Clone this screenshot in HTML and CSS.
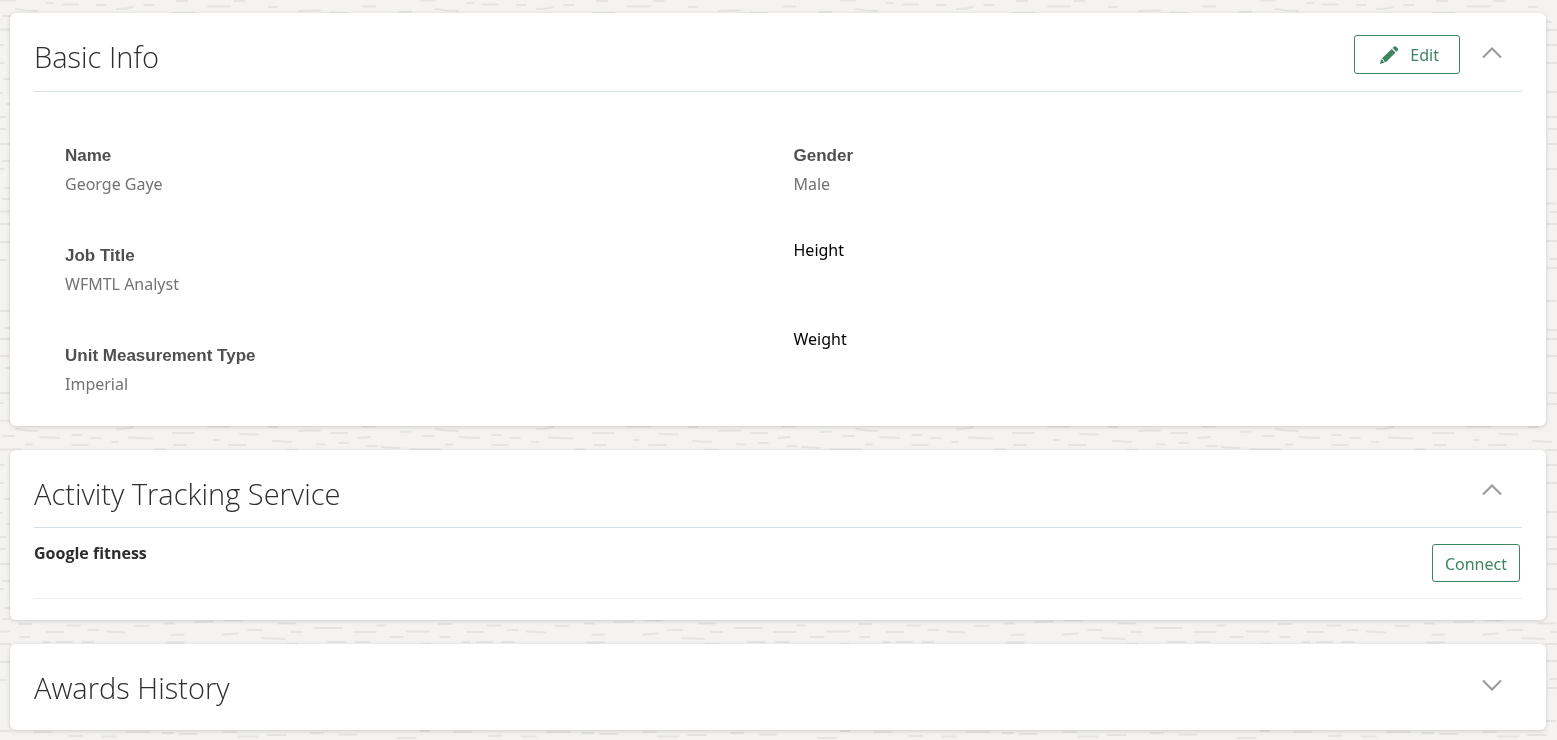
FILE: index.html
```html
<!DOCTYPE html>
<html lang="en">
<head>
<meta charset="utf-8">
<title>Profile</title>
<link rel="stylesheet" href="styles.css">
</head>
<body>
<svg class="texture" aria-hidden="true">
  <defs>
    <pattern id="grain" width="420" height="420" patternUnits="userSpaceOnUse">
      <path d="M0 .5h15M16 9l10 1.500l12 .5M47 3h6M63 4.500h15M97 5h9M117 9l9-.5l7-1.500M144 5h10M177 1h10M173 13h21M208 6.500h22M234 1h10M269 7h8M299 11l12-.5h9M331 13h16M363 6.500h12M400 12l11-.5M3 16h11M40 17l19 1M72 15h9M91 18h9M129 17.500l11 .5l12 .5M240 14l18 .5M358 18l12-1M26 24.500h6M72 25h16M112 22h6M174 25h12M214 20h5M229 25h17M273 21l18 1M317 24l8 .5M339 23h9M367 26h10M382 27l18 1M0 29.500h20M410 29.500h10M156 29.500h8"/>
      <path d="M19 204h12M67 205.500h13M135 206h13M165 203.500h9M195 202l18-.5M225 200.500h17M279 203.500h16M377 205.500h8M47 212h16M88 210h10M107 211.500l18 1M172 215l12-.5M223 214.500l15-1M248 210h14M291 212h11M315 208h27M354 212h22M20 217h10M43 222h7M57 222h15M82 222h12M167 222.500h17M262 218l22 1M328 222h17M356 222h13M390 217h13M407 211.500h13"/>
      <path d="M0 211.500h9M0 224h10M0 242h10M0 260h6M0 311h10M5 328h5M0 339h10M0 356h8M6 368h4M0 393h10M0 403h3M0 45h4M0 63h4M4 79h6M0 93h2M7 104h3M0 117h6M0 129h5M0 144h10M3 161h7M0 169h4M5 188h5M3 199h6"/>
      <path d="M34 312h17M69 316h13M102 316.500h14M127 312h23M162 313h11M180 314h17M224 312h12M238 316.500h20M268 315h18M311 313h12M340 314.500h16M398 318h18"/>
      <path d="M286 30h11M286 45h11M286 63h11M286 92h11M286 117h11M289 129h8M288 144h9M286 169h11M286 224h11M286 241h11M290 259h7M288 268h9M286 301h9M288 330h9M286 339h11M286 356h11M289 393h8M288 404h9"/>
    </pattern>
  </defs>
  <rect width="100%" height="100%" fill="url(#grain)"/>
</svg>
<main class="page">
  <section class="card card-basic">
    <header class="card-header">
      <h2 class="title">Basic Info</h2>
      <button class="btn btn-edit" type="button">
        <svg class="pencil" viewBox="0 0 20 20" aria-hidden="true"><path d="M1 19l1-4.500 2 .5.5 2 1.500.500zM2.800 13.600L12.700 4 16.500 7.500 6.800 17.200 5.200 16.500 4.800 14.800zM13.600 3.100L15.200 1.500Q16 .8 16.900 1.600L19 3.700Q19.600 4.500 18.900 5.200L17.400 6.700z"/></svg>
        <span>Edit</span>
      </button>
      <button class="toggle" type="button" aria-label="Collapse Basic Info"><svg viewBox="0 0 24 16" aria-hidden="true"><path d="M3 12.500L12 3.500l9 9"/></svg></button>
    </header>
    <div class="fields">
      <dl class="column">
        <div class="field"><dt>Name</dt><dd>George Gaye</dd></div>
        <div class="field"><dt>Job Title</dt><dd>WFMTL Analyst</dd></div>
        <div class="field"><dt>Unit Measurement Type</dt><dd>Imperial</dd></div>
      </dl>
      <dl class="column">
        <div class="field field-gender"><dt>Gender</dt><dd>Male</dd></div>
        <div class="field field-plain"><dt>Height</dt></div>
        <div class="field field-plain"><dt>Weight</dt></div>
      </dl>
    </div>
  </section>
  <section class="card card-service">
    <header class="card-header">
      <h2 class="title">Activity Tracking Service</h2>
      <button class="toggle" type="button" aria-label="Collapse Activity Tracking Service"><svg viewBox="0 0 24 16" aria-hidden="true"><path d="M3 12.500L12 3.500l9 9"/></svg></button>
    </header>
    <div class="service">
      <h3 class="service-name">Google fitness</h3>
      <button class="btn" type="button">Connect</button>
    </div>
  </section>
  <section class="card">
    <header class="card-header card-header-closed">
      <h2 class="title">Awards History</h2>
      <button class="toggle" type="button" aria-label="Expand Awards History"><svg viewBox="0 0 24 16" aria-hidden="true"><path d="M3 2.500l9 9 9-9"/></svg></button>
    </header>
  </section>
</main>
</body>
</html>
```
FILE: styles.css
```css
* { box-sizing: border-box; }
body {
  margin: 0;
  background: #f4f3f1;
  color: #2f2d2c;
  font: 16px/24px "Noto Sans", sans-serif;
}
h2, h3, dl, dt, dd { margin: 0; }
.texture {
  position: fixed;
  inset: 0;
  z-index: -1;
  width: 100%;
  height: 100%;
}
.texture path {
  fill: none;
  stroke: #e5e4e2;
  stroke-width: 2;
  stroke-linecap: round;
}
.page {
  display: flex;
  flex-direction: column;
  gap: 24px;
  padding: 13px 11px 10px 10px;
}
.card {
  padding: 0 24px;
  border-radius: 6px;
  background: #fff;
  box-shadow: 0 1px 4px rgba(0, 0, 0, 0.16);
}
.card-basic { padding-bottom: 27px; }
.card-service { padding-bottom: 21px; }
.card-header {
  display: flex;
  align-items: center;
  height: 79px;
  padding: 4px 18px 0 0;
  border-bottom: 1px solid #d6dfe6;
}
.card-service .card-header { height: 78px; }
.card-header-closed {
  height: 86px;
  padding-top: 0;
  border-bottom: 0;
}
.title {
  flex: 1;
  padding-top: 6px;
  font: 300 29px/40px "Open Sans", sans-serif;
}
.card-header-closed .title { padding-top: 2px; }
.btn {
  height: 38px;
  padding: 2px 12px 0;
  border: 1px solid #3c8560;
  border-radius: 3px;
  background: #fff;
  color: #3c8560;
  font: 16px/24px "Noto Sans", sans-serif;
}
.btn-edit {
  display: flex;
  align-items: center;
  gap: 11px;
  height: 39px;
  margin-right: 20px;
  padding: 2px 20px 0 24px;
}
.pencil {
  width: 20px;
  height: 20px;
  fill: #3c8560;
}
.toggle {
  display: flex;
  padding: 0 0 2px;
  border: 0;
  background: none;
}
.toggle svg {
  width: 24px;
  height: 16px;
  fill: none;
  stroke: #97999c;
  stroke-width: 2;
}
.fields {
  display: grid;
  grid-template-columns: 1fr 1fr;
  padding: 49px 0 0 31px;
}
.column {
  display: flex;
  flex-direction: column;
  gap: 42px;
}
.field dt {
  color: #4f4f4f;
  font: bold 17px/29px "Liberation Sans", Arial, sans-serif;
}
.field dd {
  color: #737373;
  line-height: 29px;
}
.field-gender { margin-bottom: -4px; }
.field-plain { min-height: 47px; }
.field-plain dt {
  color: #000;
  font: 16px/26px "Noto Sans", sans-serif;
}
.service {
  display: flex;
  justify-content: space-between;
  padding: 16px 2px 16px 0;
  border-bottom: 1px solid #ebebeb;
}
.service-name {
  font: 700 16px/18px "Open Sans", sans-serif;
}
```
